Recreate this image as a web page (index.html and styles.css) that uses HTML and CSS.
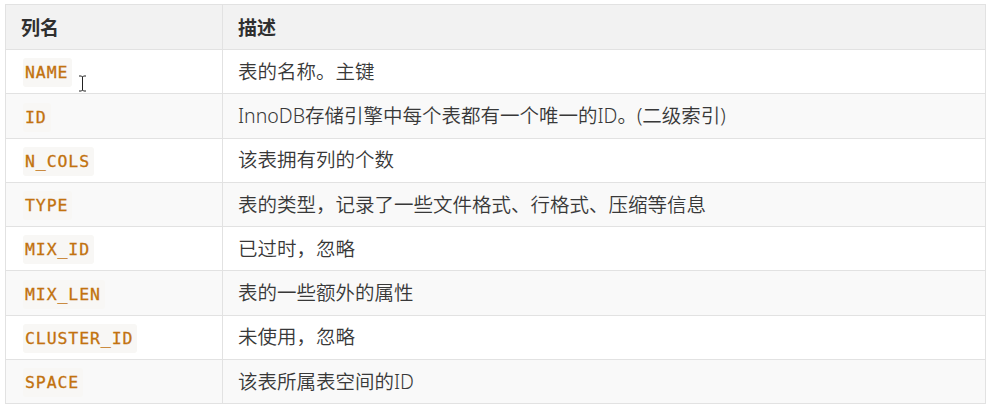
FILE: index.html
```html
<!DOCTYPE html>
<html lang="zh-CN">
<head>
<meta charset="utf-8">
<title>列名</title>
<link rel="stylesheet" href="styles.css">
</head>
<body>
<div class="wrap">
<table class="cols">
  <thead>
    <tr><th class="c1">列名</th><th>描述</th></tr>
  </thead>
  <tbody>
    <tr><td class="c1"><code>NAME</code></td><td>表的名称。主键</td></tr>
    <tr><td class="c1"><code>ID</code></td><td>InnoDB存储引擎中每个表都有一个唯一的ID。(二级索引)</td></tr>
    <tr><td class="c1"><code>N_COLS</code></td><td>该表拥有列的个数</td></tr>
    <tr><td class="c1"><code>TYPE</code></td><td>表的类型，记录了一些文件格式、行格式、压缩等信息</td></tr>
    <tr><td class="c1"><code>MIX_ID</code></td><td>已过时，忽略</td></tr>
    <tr><td class="c1"><code>MIX_LEN</code></td><td>表的一些额外的属性</td></tr>
    <tr><td class="c1"><code>CLUSTER_ID</code></td><td>未使用，忽略</td></tr>
    <tr><td class="c1"><code>SPACE</code></td><td>该表所属表空间的ID</td></tr>
  </tbody>
</table>
<svg class="cursor" width="9" height="17" viewBox="0 0 9 17" aria-hidden="true">
  <path d="M1 1h2.5l1 1 1-1H8M4.5 2v13M1 16h2.5l1-1 1 1H8" fill="none" stroke="#fff" stroke-width="2.4"/>
  <path d="M1 1h2.5l1 1 1-1H8M4.5 2v13M1 16h2.5l1-1 1 1H8" fill="none" stroke="#222" stroke-width="1"/>
</svg>
</div>
</body>
</html>
```

FILE: styles.css
```css
html, body {
  margin: 0;
  padding: 0;
  background: #ffffff;
}

.wrap {
  position: relative;
  padding: 4px 0 0 5px;
}

.cols {
  border-collapse: collapse;
  width: 981px;
  font-family: "Noto Sans", "Noto Sans CJK SC", sans-serif;
  font-size: 19.5px;
  color: #383838;
  table-layout: fixed;
}

.cols th,
.cols td {
  border: 1px solid #e2e2e2;
  padding: 0 15px;
  text-align: left;
  vertical-align: middle;
  white-space: nowrap;
}

.cols .c1 {
  width: 186px;
}

.cols th {
  height: 44px;
  background: #f2f2f2;
  font-size: 19px;
  font-weight: 700;
  color: #2f2f2f;
}

.cols td {
  height: 43.25px;
  line-height: 1;
  font-weight: 350;
}

.cols tbody tr:nth-child(even) td {
  background: #f9f9f9;
}

.cols code {
  font-family: "DejaVu Sans Mono", "Liberation Mono", monospace;
  font-size: 16.5px;
  font-weight: 400;
  letter-spacing: 0.9px;
  color: #c2720f;
  background: #f8f7f5;
  padding: 5px 4px 5px 2px;
  margin-left: 2px;
  border-radius: 3px;
  -webkit-text-stroke: 0.3px #c2720f;
}

.cursor {
  position: absolute;
  left: 78px;
  top: 75px;
}
```
